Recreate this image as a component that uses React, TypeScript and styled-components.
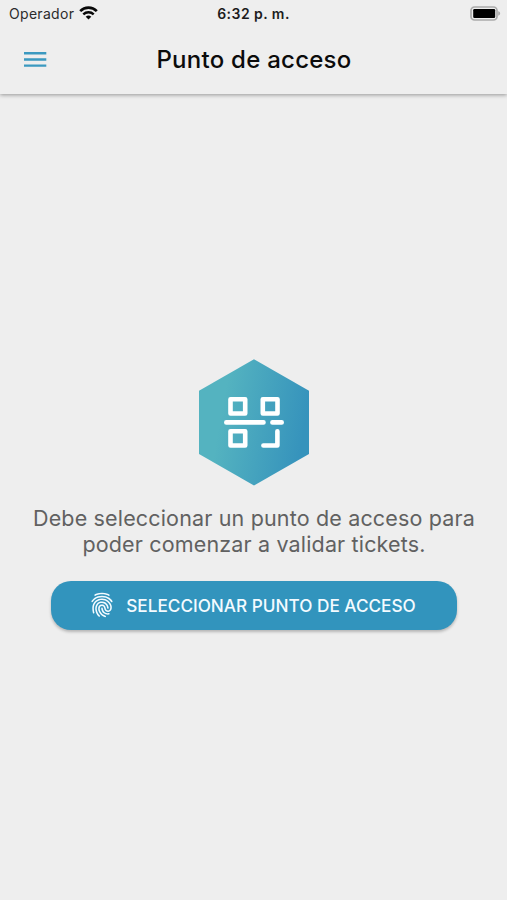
import React from "react";
import styled, { createGlobalStyle } from "styled-components";
import { IoFingerPrint } from "react-icons/io5";

const GlobalStyle = createGlobalStyle`
  * { box-sizing: border-box; }
  body { margin: 0; background: #eeeeee; }
`;

const Screen = styled.div`
  width: 100%;
  height: 100vh;
  display: flex;
  flex-direction: column;
  overflow: hidden;
  background: #eeeeee;
  font-family: Inter, "Liberation Sans", sans-serif;
`;

const Header = styled.header`
  height: 94px;
  flex: none;
  box-shadow: 0 1px 4px rgba(0, 0, 0, 0.38);
`;

const StatusBar = styled.div`
  height: 27px;
  display: grid;
  grid-template-columns: 1fr auto 1fr;
  align-items: center;
  padding: 0 6px 0 9px;
`;

const Carrier = styled.div`
  display: flex;
  align-items: center;
  gap: 5px;
  color: #2b2b2b;
  font-size: 14px;
  letter-spacing: 0.3px;
`;

const Clock = styled.div`
  padding-right: 3px;
  color: #1c1c1c;
  font-size: 14px;
  font-weight: 600;
  letter-spacing: 0.45px;
`;

const Battery = styled.svg`
  justify-self: end;
  display: block;
`;

const Toolbar = styled.div`
  height: 65px;
  display: grid;
  grid-template-columns: 46px 1fr 46px;
  align-items: center;
  padding: 0 11px 0 12px;
`;

const MenuButton = styled.button`
  display: flex;
  justify-content: center;
  padding: 0;
  border: 0;
  background: none;
`;

const Title = styled.h1`
  margin: 0;
  text-align: center;
  color: #0b0b0b;
  font-size: 24px;
  line-height: 31px;
  font-weight: 500;
  letter-spacing: 0.25px;
`;

const Content = styled.main`
  flex: 1;
  display: flex;
  flex-direction: column;
  align-items: center;
  padding-top: 264px;
`;

const Emblem = styled.svg`
  display: block;
`;

const Message = styled.p`
  margin: 19px 0 24px;
  padding-left: 1px;
  text-align: center;
  color: #616161;
  font-size: 21.5px;
  line-height: 26px;
  letter-spacing: 0.16px;
  white-space: nowrap;
`;

const ActionButton = styled.button`
  width: 406px;
  height: 49px;
  display: flex;
  align-items: center;
  justify-content: center;
  gap: 11px;
  padding: 0 2px 1px 0;
  border: 0;
  border-radius: 20px;
  background: #3294bd;
  color: #f4fbff;
  font-family: inherit;
  font-size: 17.2px;
  font-weight: 500;
  white-space: nowrap;
  box-shadow: 0 2px 3px rgba(0, 0, 0, 0.24);
`;

const WifiIcon = () => (
  <svg width="19" height="15" viewBox="0 0 19 15" fill="none" stroke="#080808">
    <path d="M1.2 5.1a11.8 11.8 0 0 1 16.6 0" strokeWidth="2.7" />
    <path d="M4.3 8.4a7.4 7.4 0 0 1 10.4 0" strokeWidth="2.4" />
    <path d="M9.5 13.6 6.7 10.8a4 4 0 0 1 5.6 0Z" fill="#080808" stroke="none" />
  </svg>
);

const MenuIcon = () => (
  <svg width="23" height="17" viewBox="0 0 23 17" stroke="#3b99c0" strokeWidth="2.4">
    <path d="M0 2.3h22.3M0 8.5h22.3M0 14.6h22.3" />
  </svg>
);

const QrEmblem = () => (
  <Emblem width="112" height="128" viewBox="198 358 112 128">
    <defs>
      <linearGradient id="emblemFill" x1="0" y1="0.4" x2="1" y2="0.6">
        <stop offset="0.2" stopColor="#54b3c0" />
        <stop offset="0.95" stopColor="#3693bc" />
      </linearGradient>
    </defs>
    <path d="M254 359.3 309 390.8v63.2L254 485.5 199 454v-63.2Z" fill="url(#emblemFill)" />
    <g fill="none" stroke="#fff" strokeWidth="4.6" strokeLinecap="round" strokeLinejoin="round">
      <rect x="230.5" y="399.3" width="14.7" height="14.2" />
      <rect x="262.8" y="399.3" width="14.7" height="14.2" />
      <rect x="230.5" y="431.3" width="14.7" height="14.2" />
      <path d="M226.3 422.4h37.2M272.4 422.4h9.3M277.4 431.3v14.2h-14" />
    </g>
  </Emblem>
);

export default function App() {
  return (
    <Screen>
      <GlobalStyle />
      <Header>
        <StatusBar>
          <Carrier>
            Operador
            <WifiIcon />
          </Carrier>
          <Clock>6:32 p. m.</Clock>
          <Battery width="31" height="15" viewBox="0 0 31 15">
            <rect x="1" y="1" width="26" height="13" rx="3.5" fill="#eee" stroke="#ababab" strokeWidth="1.7" />
            <rect x="3.2" y="3" width="22" height="9" rx="1.2" fill="#000" />
            <path d="M28.2 5.3c2.6.6 2.6 3.8 0 4.4Z" fill="#ababab" />
          </Battery>
        </StatusBar>
        <Toolbar>
          <MenuButton aria-label="Menú">
            <MenuIcon />
          </MenuButton>
          <Title>Punto de acceso</Title>
        </Toolbar>
      </Header>
      <Content>
        <QrEmblem />
        <Message>
          Debe seleccionar un punto de acceso para
          <br />
          poder comenzar a validar tickets.
        </Message>
        <ActionButton>
          <IoFingerPrint size={26} />
          SELECCIONAR PUNTO DE ACCESO
        </ActionButton>
      </Content>
    </Screen>
  );
}
